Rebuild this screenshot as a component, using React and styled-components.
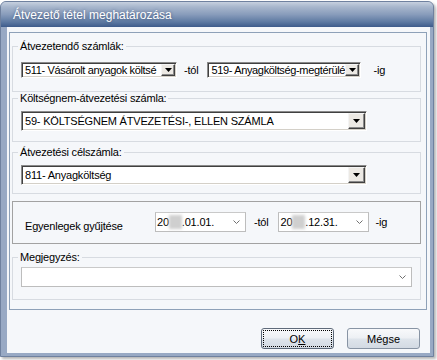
import React from "react";
import styled, { createGlobalStyle } from "styled-components";

const GlobalStyle = createGlobalStyle`
  html, body {
    margin: 0;
    padding: 0;
    background: #ffffff;
  }
  body {
    font-family: "Liberation Sans", Arial, sans-serif;
    font-size: 11px;
    letter-spacing: -0.2px;
    color: #000;
  }
  * {
    box-sizing: border-box;
  }
`;

const Screen = styled.div`
  width: 437px;
  height: 360px;
  padding-top: 1px;
  overflow: hidden;
`;

const Window = styled.div`
  width: 434px;
  height: 356px;
  display: flex;
  flex-direction: column;
  background: #98a9c4;
  border: 1px solid #6f819f;
  border-radius: 6px 6px 0 0;
  box-shadow: 2px 2px 3px rgba(0, 0, 0, 0.3);
`;

const TitleBar = styled.div`
  height: 25px;
  flex-shrink: 0;
  display: flex;
  align-items: center;
  padding-left: 12px;
  border-radius: 5px 5px 0 0;
  background: linear-gradient(
    180deg,
    #c6d0df 0%,
    #a7b6cc 20%,
    #889cbb 50%,
    #5d79a2 80%,
    #3d5b8b 100%
  );
  color: #fff;
  font-size: 12px;
  letter-spacing: 0;
  text-shadow: 0 0 3px rgba(30, 50, 90, 0.6);
`;

const Frame = styled.div`
  flex: 1;
  display: flex;
  padding: 0 3px 3px 6px;
`;

const Client = styled.div`
  flex: 1;
  display: flex;
  flex-direction: column;
  background: #f5f7fa;
  padding: 5px 3px 4px 2px;
`;

const Panel = styled.div`
  border: 1px solid #8ea1b8;
  padding: 7px 5px 9px 2px;
  display: flex;
  flex-direction: column;
`;

const Group = styled.fieldset`
  margin: ${(p) => p.$mt || 0}px 0 0 0;
  padding: ${(p) => p.$pt}px 8px ${(p) => p.$pb}px ${(p) => p.$pl || 8}px;
  border: 1px solid ${(p) => (p.$dark ? "#a2a2a2" : "#d7dbe1")};
  min-width: 0;
`;

const Legend = styled.legend`
  font-size: 11px;
  line-height: 13px;
  padding: 0 2px;
  margin-left: -3px;
`;

const Row = styled.div`
  display: flex;
  align-items: center;
`;

const Combo = styled.div`
  width: ${(p) => p.$width}px;
  height: ${(p) => p.$height}px;
  flex-shrink: 0;
  display: flex;
  background: #fff;
  border: 1px solid;
  border-color: #8a8a8a #ffffff #ffffff #8a8a8a;
  box-shadow: inset 1px 1px 0 #404040, inset -1px -1px 0 #d4d0c8;
  padding: 1px;
`;

const ComboText = styled.div`
  flex: 1;
  min-width: 0;
  display: flex;
  align-items: center;
  padding-left: 2px;
  white-space: nowrap;
  overflow: hidden;
  font-size: 11px;
  letter-spacing: ${(p) => p.$tight ? "-0.35px" : "-0.2px"};
`;

const DropButton = styled.div`
  width: ${(p) => p.$width}px;
  flex-shrink: 0;
  display: flex;
  align-items: center;
  justify-content: center;
  background: #ece9e4;
  border: 1px solid;
  border-color: #f4f4f4 #404040 #404040 #f4f4f4;
  box-shadow: inset -1px -1px 0 #8a8a8a;
`;

const Text = styled.span`
  flex-shrink: 0;
  margin: 0 ${(p) => p.$right || 0}px 0 ${(p) => p.$left || 0}px;
  font-size: 11px;
  white-space: nowrap;
`;

const FieldLabel = styled.span`
  width: 130px;
  flex-shrink: 0;
  padding-top: 8px;
  font-size: 11px;
`;

const Picker = styled.div`
  width: ${(p) => p.$width}px;
  height: 20px;
  flex-shrink: 0;
  display: flex;
  align-items: center;
  background: #fff;
  border: 1px solid #bdbdbd;
  border-top-color: #c9c9c9;
  padding: 0 5px 0 1px;
  font-size: 11px;
`;

const PickerValue = styled.div`
  flex: 1;
  display: flex;
  align-items: center;
  white-space: nowrap;
`;

const Masked = styled.span`
  display: inline-block;
  width: 13px;
  height: 14px;
  background: #cfcfcf;
  filter: blur(1.5px);
`;

const ButtonRow = styled.div`
  margin-top: 18px;
  display: flex;
  justify-content: flex-end;
  gap: 13px;
  padding-right: 7px;
`;

const Button = styled.button`
  width: 73px;
  height: 21px;
  padding: 0;
  font-family: "Liberation Sans", Arial, sans-serif;
  font-size: 11px;
  color: #000;
  border: 1px solid ${(p) => (p.$default ? "#5e6a7a" : "#8894a4")};
  border-radius: 3px;
  background: linear-gradient(
    180deg,
    #f8f9fb 0%,
    #edf0f4 47%,
    #dee4eb 53%,
    #d3dae3 100%
  );
  outline: ${(p) => (p.$default ? "1px dotted #000" : "none")};
  outline-offset: -3px;

  u {
    text-decoration: underline;
  }
`;

const Arrow = () => (
  <svg width="7" height="4" viewBox="0 0 7 4">
    <polygon points="0,0 7,0 3.5,4" fill="#000" />
  </svg>
);

const Chevron = () => (
  <svg width="7" height="5" viewBox="0 0 7 5">
    <polyline points="0.5,0.5 3.5,3.5 6.5,0.5" fill="none" stroke="#707070" strokeWidth="1" />
  </svg>
);

const OldCombo = ({ width, height, button, tight, children }) => (
  <Combo $width={width} $height={height}>
    <ComboText $tight={tight}>{children}</ComboText>
    <DropButton $width={button}>
      <Arrow />
    </DropButton>
  </Combo>
);

const DatePicker = ({ width, suffix }) => (
  <Picker $width={width}>
    <PickerValue>
      20
      <Masked />
      {suffix}
    </PickerValue>
    <Chevron />
  </Picker>
);

export default function App() {
  return (
    <Screen>
      <GlobalStyle />
      <Window>
        <TitleBar>Átvezető tétel meghatározása</TitleBar>
        <Frame>
          <Client>
            <Panel>
              <Group $pt={9} $pb={13}>
                <Legend>Átvezetendő számlák:</Legend>
                <Row>
                  <OldCombo width={156} height={16} button={14} tight>
                    511- Vásárolt anyagok költsé
                  </OldCombo>
                  <Text $left={7} $right={9}>-tól</Text>
                  <OldCombo width={154} height={16} button={14} tight>
                    519- Anyagköltség-megtérülé
                  </OldCombo>
                  <Text $left={12}>-ig</Text>
                </Row>
              </Group>

              <Group $pt={6} $pb={10}>
                <Legend>Költségnem-átvezetési számla:</Legend>
                <OldCombo width={346} height={20} button={17}>
                  59- KÖLTSÉGNEM ÁTVEZETÉSI-, ELLEN SZÁMLA
                </OldCombo>
              </Group>

              <Group $mt={4} $pt={6} $pb={8}>
                <Legend>Átvezetési célszámla:</Legend>
                <OldCombo width={346} height={20} button={17}>
                  811- Anyagköltség
                </OldCombo>
              </Group>

              <Group $mt={7} $pt={10} $pb={11} $pl={12} $dark>
                <Row>
                  <FieldLabel>Egyenlegek gyűjtése</FieldLabel>
                  <DatePicker width={91} suffix=".01.01." />
                  <Text $left={8} $right={10}>-tól</Text>
                  <DatePicker width={91} suffix=".12.31." />
                  <Text $left={6}>-ig</Text>
                </Row>
              </Group>

              <Group $mt={7} $pt={3} $pb={12}>
                <Legend>Megjegyzés:</Legend>
                <Picker $width={391}>
                  <PickerValue />
                  <Chevron />
                </Picker>
              </Group>
            </Panel>

            <ButtonRow>
              <Button $default>
                O<u>K</u>
              </Button>
              <Button>Mégse</Button>
            </ButtonRow>
          </Client>
        </Frame>
      </Window>
    </Screen>
  );
}
